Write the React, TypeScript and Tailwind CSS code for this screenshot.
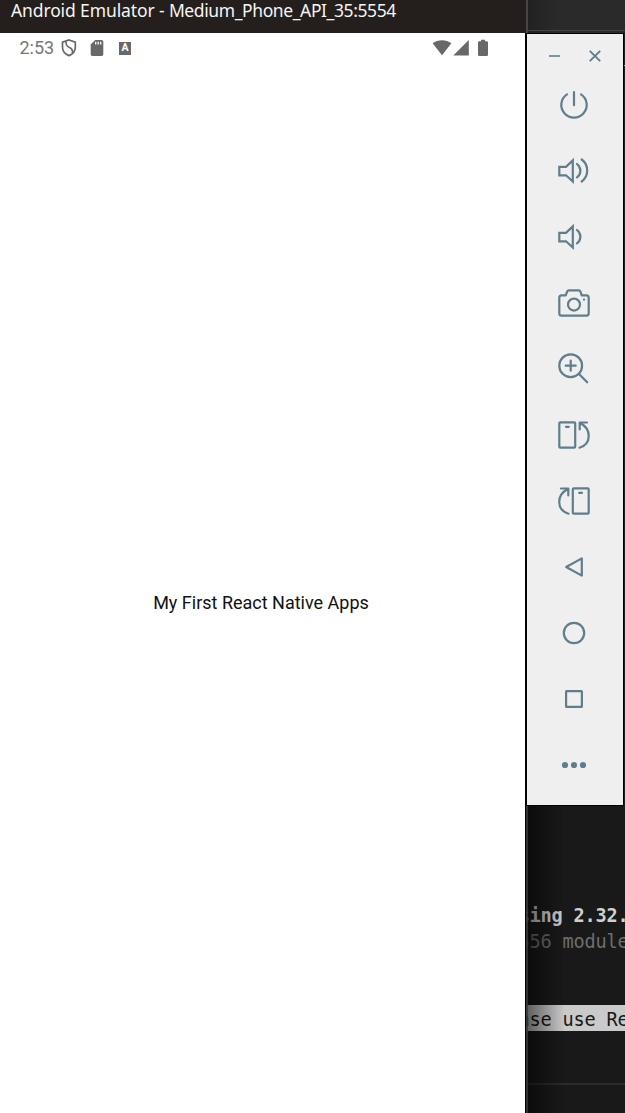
import type { ReactNode } from "react";

function ToolIcon({ label, children }: { label: string; children: ReactNode }) {
  return (
    <button aria-label={label} className="flex h-[66px] w-full items-center justify-center">
      <svg
        width="36"
        height="36"
        viewBox="-18 -18 36 36"
        fill="none"
        stroke="currentColor"
        strokeWidth="2.2"
        strokeLinejoin="round"
        strokeLinecap="round"
      >
        {children}
      </svg>
    </button>
  );
}

const speaker = "M-14.7 -4.2H-8L-1.2 -10.6V10.6L-8 4.3H-14.7Z";

function RotateShape() {
  return (
    <>
      <rect x="-14.7" y="-12.7" width="15.9" height="25.4" rx="1" />
      <path d="M-8 -8.2h2.8" />
      <path d="M13 -12.5H5.7V-5.5M6 -12C18 -6 17.500 9 5.500 12.700" />
    </>
  );
}

function Toolbar() {
  return (
    <aside className="flex h-[773px] w-[99px] flex-col border-b border-l-2 border-t border-black bg-[#efefef] pr-[3px] text-[#607d8b] shadow-[inset_-1px_0_0_#000]">
      <div className="flex h-[38px] items-center justify-end gap-[29px] pr-[20px] pt-[6px]">
        <svg width="11" height="12" viewBox="0 0 11 12" stroke="#7d95a1" strokeWidth="2">
          <path d="M0 6h11" />
        </svg>
        <svg width="12" height="12" viewBox="0 0 12 12" stroke="currentColor" strokeWidth="1.9">
          <path d="M.8.8l10.400 10.400M11.200.8L.8 11.200" />
        </svg>
      </div>
      <ToolIcon label="Power">
        <path d="M-7 -10.700A12.700 12.700 0 1 0 7 -10.700M0 -12.800V.2" />
      </ToolIcon>
      <ToolIcon label="Volume up">
        <path d={speaker} strokeLinejoin="miter" />
        <path d="M3 -7C7.500 -3.500 7.500 3 3 6.300M7.700 -11.500C15 -6 15 5 7.700 10.500" />
      </ToolIcon>
      <ToolIcon label="Volume down">
        <path d={speaker} strokeLinejoin="miter" />
        <path d="M3 -7C7.500 -3.500 7.500 3 3 6.300" />
      </ToolIcon>
      <ToolIcon label="Take screenshot">
        <path d="M-12.500 -7.700H-8.300L-6.800 -11.500Q-6.400 -12.700 -5.200 -12.700H4.800Q6 -12.700 6.400 -11.500L7.700 -7.700H12.500Q14.700 -7.700 14.700 -5.300V10.300Q14.700 12.700 12.500 12.700H-12.500Q-14.700 12.700 -14.700 10.300V-5.300Q-14.700 -7.700 -12.500 -7.700Z" />
        <circle cx="0" cy="1.600" r="6" />
        <path d="M9.900 -3.400h.2" />
      </ToolIcon>
      <ToolIcon label="Zoom">
        <circle cx="-3.300" cy="-3.300" r="11.400" />
        <path d="M5 5l8.200 8.300M-8.300 -3.300h10M-3.300 -8.300v10" />
      </ToolIcon>
      <ToolIcon label="Rotate left">
        <RotateShape />
      </ToolIcon>
      <ToolIcon label="Rotate right">
        <g transform="scale(-1 1)">
          <RotateShape />
        </g>
      </ToolIcon>
      <ToolIcon label="Back">
        <path d="M-7.800 0L7.800 -8.600V8.600Z" />
      </ToolIcon>
      <ToolIcon label="Home">
        <circle r="10.200" />
      </ToolIcon>
      <ToolIcon label="Overview">
        <rect x="-7.900" y="-7.900" width="15.800" height="15.800" rx=".5" />
      </ToolIcon>
      <ToolIcon label="More">
        <g fill="currentColor" stroke="none">
          <circle cx="-9" r="3.100" />
          <circle r="3.100" />
          <circle cx="9" r="3.100" />
        </g>
      </ToolIcon>
    </aside>
  );
}

function StatusBar() {
  return (
    <div className="flex h-[30px] items-center pl-[19px] pr-[37px] text-[#686868]">
      <span className="w-[42px] whitespace-nowrap pl-[.5px] font-['Roboto',sans-serif] text-[18px] leading-[30px] text-[#777]">2:53</span>
      <svg width="16" height="18" viewBox="0 0 16 18" fill="none" stroke="currentColor" strokeWidth="1.700">
        <path d="M8 1L14.300 3.200V8.200C14.300 12.500 11.800 15 8 16.600C4.200 15 1.500 12.500 1.500 8.200V3.200Z" />
        <path d="M5 2.500C5 6.500 6 7.500 8.500 8.500C11 9.500 11.700 11.500 11.500 14" />
      </svg>
      <svg className="ml-[13px]" width="14" height="18" viewBox="0 0 14 18">
        <path fill="currentColor" d="M5.200 1H11.600Q13.300 1 13.300 2.700V15.300Q13.300 17 11.600 17H2.400Q.7 17 .7 15.300V5.600Z" />
        <path stroke="#fff" strokeWidth="1.300" d="M5.700 2.800v2.800M8.200 2.800v2.800M10.700 2.800v2.800" />
      </svg>
      <span className="ml-[15px] flex h-[13px] w-[12px] items-center justify-center bg-[#686868] font-['Roboto',sans-serif] text-[10.5px] font-bold leading-none text-white">A</span>
      <div className="ml-auto flex items-center">
        <svg width="20" height="18" viewBox="0 0 20 18" fill="currentColor">
          <path d="M.6 4.200C6 .1 14 .1 19.400 4.200L10 16.200Z" />
        </svg>
        <svg className="ml-px" width="16" height="18" viewBox="0 0 16 18" fill="currentColor">
          <path d="M15.800 1V16.500H.3Z" />
        </svg>
        <svg className="ml-[9px]" width="10" height="18" viewBox="0 0 10 18" fill="currentColor">
          <path d="M3 .8H7V2.300H8.800Q10 2.300 10 3.500V15.800Q10 17 8.800 17H1.200Q0 17 0 15.800V3.500Q0 2.300 1.200 2.300H3Z" />
        </svg>
      </div>
    </div>
  );
}

function Console() {
  return (
    <div className="relative flex-1 overflow-hidden bg-[#191919] pt-[97px] font-['DejaVu_Sans_Mono',monospace] text-[18.600px] leading-[26px] tracking-[-.2px]">
      <p className="-indent-[6.5px] whitespace-pre font-bold text-[#cfcfcf]">sing 2.32.1</p>
      <p className="-indent-[6.5px] whitespace-pre text-[#6e6e6e]">556 modules</p>
      <p className="mt-[50px] h-[26px] -indent-[6.5px] whitespace-pre bg-[#cacaca] pt-[2px] text-[#181818]">ase use Rel</p>
      <div className="mt-[52px] h-[2px] bg-[#2b2b2b]" />
      <div className="absolute inset-y-0 left-0 w-[40px] border-l border-black bg-linear-to-r from-black/55 to-transparent" />
      <div className="absolute inset-y-0 left-px w-[2px] bg-[#383a3a]/85" />
    </div>
  );
}

export default function App() {
  return (
    <main className="flex h-[1113px] w-[625px] overflow-hidden bg-[#181818]">
      <section className="flex w-[525px] shrink-0 flex-col bg-white">
        <header className="h-[33px] whitespace-nowrap bg-[#241f1c] pl-[11px] font-['Noto_Sans',sans-serif] text-[17.500px] leading-[20px] text-[#f5f5f5]">
          <span className="tracking-[-.12px]">Android Emulator - </span>
          <span className="tracking-[-.4px]">Medium_Phone_API_35:5554</span>
        </header>
        <StatusBar />
        <div className="flex flex-1 items-start justify-center pr-[3px] pt-[528px] font-['Roboto',sans-serif] text-[18px] leading-[24px] text-[#111]">
          My First React Native Apps
        </div>
      </section>
      <section className="flex w-[100px] flex-col">
        <div className="flex h-[33px] bg-[#241f1c] pl-px">
          <div className="flex-1 border-l-2 border-[#454545] bg-linear-to-r from-[#212121] to-[#2a2a2a] to-30% pt-[30px]">
            <div className="h-px bg-[#454545]" />
          </div>
        </div>
        <div className="flex">
          <Toolbar />
          <div className="h-[773px] w-px bg-[#1d1d1d] pt-[32px]">
            <div className="h-px bg-[#b99a7a]" />
          </div>
        </div>
        <Console />
      </section>
    </main>
  );
}
